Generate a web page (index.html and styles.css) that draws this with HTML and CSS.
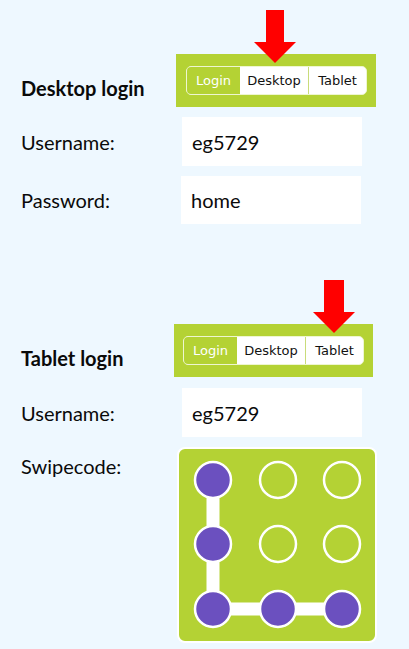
FILE: index.html
```html
<!DOCTYPE html>
<html lang="en">
<head>
<meta charset="utf-8">
<title>Login</title>
<link rel="stylesheet" href="styles.css">
</head>
<body>
<main class="page">
  <section class="login">
    <div class="login-head">
      <h2 class="title">Desktop login</h2>
      <div class="bar">
        <svg class="arrow arrow--desktop" width="44" height="53" viewBox="0 0 44 53" aria-hidden="true"><polygon points="13,0 31,0 31,32 43,32 22,53 1,32 13,32" fill="#ff0000"/></svg>
        <div class="seg">
          <span class="seg-item seg-item--active seg-login">Login</span>
          <span class="seg-item seg-desktop">Desktop</span>
          <span class="seg-item seg-tablet">Tablet</span>
        </div>
      </div>
    </div>
    <div class="row">
      <span class="label">Username:</span>
      <div class="field">eg5729</div>
    </div>
    <div class="row">
      <span class="label">Password:</span>
      <div class="field field--short">home</div>
    </div>
  </section>

  <section class="login login--tablet">
    <div class="login-head">
      <h2 class="title">Tablet login</h2>
      <div class="bar bar--tablet">
        <svg class="arrow arrow--tablet" width="44" height="53" viewBox="0 0 44 53" aria-hidden="true"><polygon points="12,0 32,0 32,32 43,32 22,53 1,32 12,32" fill="#ff0000"/></svg>
        <div class="seg">
          <span class="seg-item seg-item--active seg-login">Login</span>
          <span class="seg-item seg-desktop">Desktop</span>
          <span class="seg-item seg-tablet">Tablet</span>
        </div>
      </div>
    </div>
    <div class="row row--tablet">
      <span class="label">Username:</span>
      <div class="field">eg5729</div>
    </div>
    <div class="row row--swipe">
      <span class="label label--swipe">Swipecode:</span>
      <div class="swipe">
        <svg width="196" height="192" viewBox="0 0 196 192" aria-hidden="true">
          <polyline points="34,31 34,160 163,160" fill="none" stroke="#ffffff" stroke-width="13"/>
          <circle cx="34" cy="31" r="18" fill="#6b50bf" stroke="#fff" stroke-width="2.5"/>
          <circle cx="99" cy="31" r="18" fill="none" stroke="#fff" stroke-width="2.5"/>
          <circle cx="163" cy="31" r="18" fill="none" stroke="#fff" stroke-width="2.5"/>
          <circle cx="34" cy="95" r="18" fill="#6b50bf" stroke="#fff" stroke-width="2.5"/>
          <circle cx="99" cy="95" r="18" fill="none" stroke="#fff" stroke-width="2.5"/>
          <circle cx="163" cy="95" r="18" fill="none" stroke="#fff" stroke-width="2.5"/>
          <circle cx="34" cy="160" r="18" fill="#6b50bf" stroke="#fff" stroke-width="2.5"/>
          <circle cx="99" cy="160" r="18" fill="#6b50bf" stroke="#fff" stroke-width="2.5"/>
          <circle cx="163" cy="160" r="18" fill="#6b50bf" stroke="#fff" stroke-width="2.5"/>
        </svg>
      </div>
    </div>
  </section>
</main>
</body>
</html>
```

FILE: styles.css
```css
* { box-sizing: border-box; }

html, body {
  margin: 0;
  padding: 0;
  background: #eef8ff;
}

body {
  font-family: Lato, "Open Sans", sans-serif;
  color: #0a0a0a;
}

.page {
  padding: 54px 0 0 21px;
}

.login {
  display: flex;
  flex-direction: column;
  gap: 10px;
}

.login--tablet {
  margin-top: 100px;
}

.login-head {
  display: flex;
  align-items: flex-end;
}

.title {
  margin: 0 0 8px 0;
  width: 155px;
  font-size: 20px;
  line-height: 22px;
  font-weight: 700;
  color: #0a0a0a;
}

.bar {
  position: relative;
  width: 200px;
  height: 53px;
  background: #b4d234;
  padding: 12px 0 0 10px;
}

.bar--tablet {
  margin-left: -2px;
  width: 199px;
  padding-left: 9px;
}

.arrow {
  position: absolute;
  top: -44px;
}

.arrow--desktop { left: 77px; }
.arrow--tablet { left: 138px; }

.seg {
  display: flex;
  width: 181px;
  height: 29px;
  border: 1px solid #eef6d0;
  border-radius: 5px;
  overflow: hidden;
  background: #fff;
  font-family: "DejaVu Sans", Verdana, sans-serif;
  font-size: 13px;
}

.seg-item {
  display: flex;
  align-items: center;
  justify-content: center;
  color: #111;
}

.seg-item--active {
  background: #b4d234;
  color: #fff;
}

.seg-login { width: 53px; }
.seg-desktop { width: 69px; border-right: 1px solid #c9dc7a; }
.seg-tablet { flex: 1; }

.row {
  display: flex;
  align-items: center;
}

.row--tablet {
  margin-top: 1px;
}

.row--swipe {
  align-items: flex-start;
}

.label {
  width: 161px;
  font-size: 20px;
  line-height: 24px;
}

.label--swipe {
  margin-top: 7px;
}

.field {
  width: 180px;
  height: 49px;
  background: #fff;
  padding-left: 10px;
  display: flex;
  align-items: center;
  font-size: 20px;
}

.field--short {
  height: 48px;
  margin-left: -1px;
}

.swipe {
  margin-left: -5px;
  width: 200px;
  height: 196px;
  background: #b4d234;
  border: 2px solid #fff;
  border-radius: 8px;
}

.swipe svg {
  display: block;
}
```
